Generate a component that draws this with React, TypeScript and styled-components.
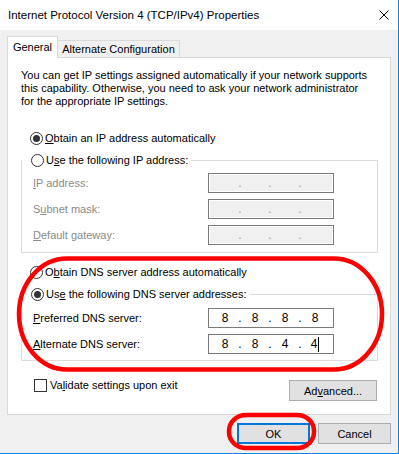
import React from 'react';
import styled, { createGlobalStyle } from 'styled-components';

const GlobalStyle = createGlobalStyle`
  html, body {
    margin: 0;
    padding: 0;
    background: #f0f0f0;
  }
  body {
    font-family: 'Liberation Sans', Arial, sans-serif;
    font-size: 11px;
    color: #000;
  }
`;

const Window = styled.div`
  position: relative;
  width: 399px;
  height: 454px;
  box-sizing: border-box;
  background: #f0f0f0;
  border-right: 1px solid #1883d7;
  border-bottom: 1px solid #1883d7;
  overflow: hidden;
`;

const TitleBar = styled.div`
  height: 30px;
  background: #fff;
  display: flex;
  align-items: center;
  justify-content: space-between;
  padding: 0 9px 0 8px;
  font-size: 11.5px;
`;

const Body = styled.div`
  padding: 6px 0 0 7px;
`;

const TabRow = styled.div`
  display: flex;
  align-items: flex-end;
  height: 21px;
`;

const Tab = styled.div<{ $active?: boolean }>`
  box-sizing: border-box;
  display: flex;
  align-items: center;
  justify-content: center;
  border: 1px solid #d9d9d9;
  border-bottom: none;
  position: relative;
  z-index: 1;
  ${(p) =>
    p.$active
      ? `
    width: 51px;
    height: 22px;
    margin-bottom: -1px;
    background: #fff;
    padding-bottom: 1px;
  `
      : `
    width: 122px;
    height: 17px;
    border-left: none;
    background: #f0f0f0;
  `}
`;

const Panel = styled.div`
  box-sizing: border-box;
  width: 384px;
  height: 358px;
  background: #fff;
  border: 1px solid #d9d9d9;
  padding: 11px 12px 0 13px;
`;

const Intro = styled.p`
  margin: 0;
  line-height: 13px;
  white-space: nowrap;
`;

const Key = styled.span`
  text-decoration: underline;
  text-underline-offset: 1px;
`;

const RadioRow = styled.div<{ $top?: number }>`
  display: flex;
  align-items: center;
  gap: 2px;
  height: 16px;
  padding-left: 9px;
  margin-top: ${(p) => p.$top ?? 0}px;
  white-space: nowrap;
`;

const Radio = styled.span<{ $checked?: boolean }>`
  box-sizing: border-box;
  width: 13px;
  height: 13px;
  border: 1px solid #333;
  border-radius: 50%;
  background: #fff;
  display: flex;
  align-items: center;
  justify-content: center;
  &::after {
    content: '';
    width: 7px;
    height: 7px;
    border-radius: 50%;
    background: ${(p) => (p.$checked ? '#333' : 'transparent')};
  }
`;

const Group = styled.fieldset<{ $top: number }>`
  box-sizing: border-box;
  width: 357px;
  margin: ${(p) => p.$top}px 0 0 0;
  padding: 0;
  border: 1px solid #dcdcdc;
`;

const Legend = styled.legend`
  padding: 0 3px 0 0;
  margin-left: 0;
`;

const GroupContent = styled.div<{ $pt: number; $pb: number }>`
  display: flex;
  flex-direction: column;
  gap: 6px;
  padding: ${(p) => p.$pt}px 0 ${(p) => p.$pb}px 11px;
`;

const FieldRow = styled.div<{ $disabled?: boolean }>`
  display: flex;
  align-items: center;
  height: 20px;
  color: ${(p) => (p.$disabled ? '#8a8a8a' : '#000')};
`;

const FieldLabel = styled.span`
  width: 175px;
`;

const IpBox = styled.div<{ $disabled?: boolean }>`
  box-sizing: border-box;
  width: 126px;
  height: 20px;
  border: 1px solid #7a7a7a;
  background: ${(p) => (p.$disabled ? '#f0f0f0' : '#fff')};
  box-shadow: ${(p) => (p.$disabled ? 'inset 0 0 0 1px #fff' : 'none')};
  display: flex;
  align-items: center;
  padding-left: 4px;
  font-size: 12px;
  color: ${(p) => (p.$disabled ? '#9a9a9a' : '#000')};
`;

const Octet = styled.span`
  width: 24px;
  display: flex;
  align-items: center;
  justify-content: center;
`;

const Dot = styled.span`
  width: 6px;
  text-align: center;
`;

const Caret = styled.span`
  display: inline-block;
  width: 1px;
  height: 15px;
  background: #000;
  margin-left: 1px;
`;

const BottomRow = styled.div`
  box-sizing: border-box;
  width: 357px;
  margin-top: 17px;
  padding: 0 1px 0 13px;
  display: flex;
  justify-content: space-between;
  align-items: flex-start;
`;

const CheckLabel = styled.label`
  display: flex;
  align-items: center;
  gap: 3px;
  height: 14px;
  white-space: nowrap;
`;

const CheckBox = styled.span`
  box-sizing: border-box;
  width: 13px;
  height: 13px;
  border: 1px solid #333;
  background: #fff;
`;

const Button = styled.button<{ $w: number; $default?: boolean; $top?: number }>`
  box-sizing: border-box;
  width: ${(p) => p.$w}px;
  height: 21px;
  margin-top: ${(p) => p.$top ?? 0}px;
  padding: 0;
  font: inherit;
  color: #000;
  background: #e1e1e1;
  border: ${(p) => (p.$default ? '2px solid #0078d7' : '1px solid #adadad')};
`;

const ButtonBar = styled.div`
  display: flex;
  justify-content: flex-end;
  gap: 8px;
  margin-top: 8px;
  padding-right: 7px;
`;

const Marks = styled.svg`
  position: absolute;
  inset: 0;
  pointer-events: none;
`;

function CloseIcon() {
  return (
    <svg width='10' height='10' viewBox='0 0 10 10'>
      <path d='M0.5 0.5 L9.5 9.5 M9.5 0.5 L0.5 9.5' stroke='#000' strokeWidth='1' />
    </svg>
  );
}

function IpField({ values, disabled, caret }: { values: string[]; disabled?: boolean; caret?: boolean }) {
  return (
    <IpBox $disabled={disabled}>
      {values.map((v, i) => (
        <React.Fragment key={i}>
          {i > 0 && <Dot>.</Dot>}
          <Octet>
            {v}
            {caret && i === 3 && <Caret />}
          </Octet>
        </React.Fragment>
      ))}
    </IpBox>
  );
}

const blank = ['', '', '', ''];

export default function App() {
  return (
    <Window>
      <GlobalStyle />
      <TitleBar>
        <span>Internet Protocol Version 4 (TCP/IPv4) Properties</span>
        <CloseIcon />
      </TitleBar>
      <Body>
        <TabRow>
          <Tab $active>General</Tab>
          <Tab>Alternate Configuration</Tab>
        </TabRow>
        <Panel>
          <Intro>
            You can get IP settings assigned automatically if your network supports
            <br />
            this capability. Otherwise, you need to ask your network administrator
            <br />
            for the appropriate IP settings.
          </Intro>

          <RadioRow $top={22}>
            <Radio $checked />
            <span>
              <Key>O</Key>btain an IP address automatically
            </span>
          </RadioRow>

          <Group $top={6}>
            <Legend>
              <RadioRow>
                <Radio />
                <span>
                  U<Key>s</Key>e the following IP address:
                </span>
              </RadioRow>
            </Legend>
            <GroupContent $pt={5} $pb={7}>
              <FieldRow $disabled>
                <FieldLabel>
                  <Key>I</Key>P address:
                </FieldLabel>
                <IpField values={blank} disabled />
              </FieldRow>
              <FieldRow $disabled>
                <FieldLabel>
                  S<Key>u</Key>bnet mask:
                </FieldLabel>
                <IpField values={blank} disabled />
              </FieldRow>
              <FieldRow $disabled>
                <FieldLabel>
                  <Key>D</Key>efault gateway:
                </FieldLabel>
                <IpField values={blank} disabled />
              </FieldRow>
            </GroupContent>
          </Group>

          <RadioRow $top={11}>
            <Radio />
            <span>
              O<Key>b</Key>tain DNS server address automatically
            </span>
          </RadioRow>

          <Group $top={6}>
            <Legend>
              <RadioRow>
                <Radio $checked />
                <span>
                  Us<Key>e</Key> the following DNS server addresses:
                </span>
              </RadioRow>
            </Legend>
            <GroupContent $pt={6} $pb={6}>
              <FieldRow>
                <FieldLabel>
                  <Key>P</Key>referred DNS server:
                </FieldLabel>
                <IpField values={['8', '8', '8', '8']} />
              </FieldRow>
              <FieldRow>
                <FieldLabel>
                  <Key>A</Key>lternate DNS server:
                </FieldLabel>
                <IpField values={['8', '8', '4', '4']} caret />
              </FieldRow>
            </GroupContent>
          </Group>

          <BottomRow>
            <CheckLabel>
              <CheckBox />
              <span>
                Va<Key>l</Key>idate settings upon exit
              </span>
            </CheckLabel>
            <Button $w={88} $top={2}>
              Ad<Key>v</Key>anced...
            </Button>
          </BottomRow>
        </Panel>
        <ButtonBar>
          <Button $w={73} $default>
            OK
          </Button>
          <Button $w={73}>Cancel</Button>
        </ButtonBar>
      </Body>
      <Marks width='399' height='454' viewBox='0 0 399 454'>
        <rect x='19' y='258.5' width='363' height='111' rx='48' ry='56' fill='none' stroke='#ff0000' strokeWidth='4.5' />
        <rect x='229' y='415' width='85' height='33' rx='17' ry='16' fill='none' stroke='#ff0000' strokeWidth='4.5' />
      </Marks>
    </Window>
  );
}
